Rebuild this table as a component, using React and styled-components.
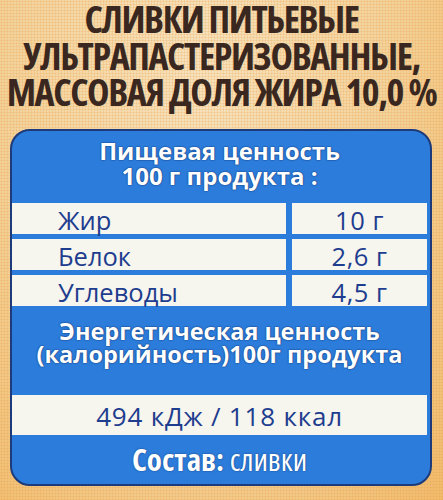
import React from "react";
import styled, { createGlobalStyle } from "styled-components";

const GlobalStyle = createGlobalStyle`
  html, body {
    margin: 0;
    padding: 0;
  }
  body {
    width: 443px;
    height: 500px;
    overflow: hidden;
  }
`;

const rows = [
  { name: "Жир", value: "10 г" },
  { name: "Белок", value: "2,6 г" },
  { name: "Углеводы", value: "4,5 г" },
];

function App() {
  return (
    <>
      <GlobalStyle />
      <Label>
        <Title>
          <TitleLine>СЛИВКИ ПИТЬЕВЫЕ</TitleLine>
          <TitleLine>УЛЬТРАПАСТЕРИЗОВАННЫЕ,</TitleLine>
          <TitleLine>МАССОВАЯ ДОЛЯ ЖИРА 10,0 %</TitleLine>
        </Title>

        <Panel>
          <Heading $size="24px" $line="25px" $top="7px">
            Пищевая ценность
            <br />
            100 г продукта :
          </Heading>

          <Table>
            {rows.map((r) => (
              <Row key={r.name}>
                <NameCell>{r.name}</NameCell>
                <ValueCell>{r.value}</ValueCell>
              </Row>
            ))}
          </Table>

          <Heading $size="23.5px" $line="23px" $top="14px">
            Энергетическая ценность
            <br />
            (калорийность)100г продукта
          </Heading>

          <EnergyBox>494 кДж / 118 ккал</EnergyBox>

          <Composition>
            <strong>Состав:</strong> сливки
          </Composition>
        </Panel>
      </Label>
    </>
  );
}

export default App;

const Label = styled.div`
  width: 443px;
  height: 500px;
  box-sizing: border-box;
  padding-top: 0;
  background-color: #f4d9a8;
  background-image:
    radial-gradient(circle, rgba(232, 150, 60, 0.35) 0.8px, transparent 1.2px),
    radial-gradient(ellipse at 45% 15%, #f6e2bd 0%, #f3d39c 55%, #f0bb6c 100%);
  background-size: 3px 3px, 100% 100%;
  display: flex;
  flex-direction: column;
`;

const Title = styled.div`
  display: flex;
  flex-direction: column;
  align-items: center;
  color: #3a2820;
  font-family: "Open Sans", "DejaVu Sans Condensed", sans-serif;
  font-stretch: 75%;
  font-weight: 700;
  font-size: 38px;
  line-height: 36.5px;
  letter-spacing: -1.4px;
`;

const TitleLine = styled.div`
  white-space: nowrap;
`;

const Panel = styled.div`
  margin: 19px 11px 0 10px;
  border: 2px solid #1d3b7a;
  border-radius: 20px;
  background: #2c7ddb;
  padding: 0 3px 6px 0;
  display: flex;
  flex-direction: column;
  font-family: "Open Sans", sans-serif;
`;

const Heading = styled.div`
  margin-top: ${(p) => p.$top};
  text-align: center;
  color: #ffffff;
  font-weight: 700;
  font-size: ${(p) => p.$size};
  line-height: ${(p) => p.$line};
  text-shadow: 0 0 2px #163a7c, 0 0 1px #163a7c;
`;

const Table = styled.div`
  margin-top: 15px;
  display: flex;
  flex-direction: column;
  gap: 5px;
`;

const Row = styled.div`
  display: grid;
  grid-template-columns: 274px 1fr;
  gap: 6px;
`;

const Cell = styled.div`
  height: 31px;
  background: #f6f5ee;
  color: #1e3d8e;
  font-size: 25.5px;
  line-height: 35px;
  overflow: visible;
`;

const NameCell = styled(Cell)`
  padding-left: 46px;
`;

const ValueCell = styled(Cell)`
  text-align: center;
  letter-spacing: 0.5px;
`;

const EnergyBox = styled.div`
  margin-top: 29px;
  height: 40px;
  background: #f6f5ee;
  color: #1e3d8e;
  text-align: center;
  font-size: 26px;
  letter-spacing: 0.8px;
  line-height: 42px;
`;

const Composition = styled.div`
  margin-top: 5px;
  text-align: center;
  color: #ffffff;
  font-size: 31px;
  font-stretch: 75%;
  line-height: 38px;
  text-shadow: 0 0 2px #163a7c;

  strong {
    font-weight: 700;
  }
`;
